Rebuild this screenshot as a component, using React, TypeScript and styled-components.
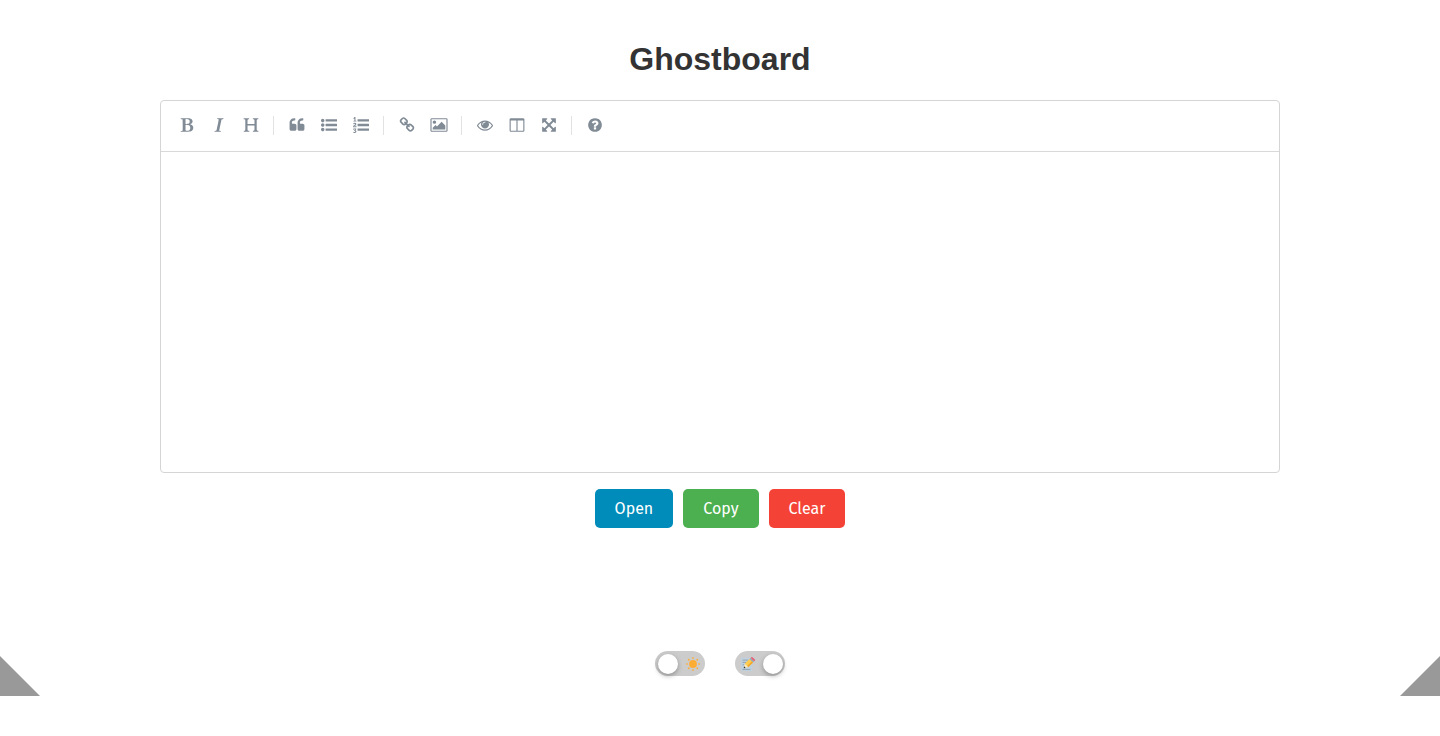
import React, { useState } from "react";
import styled, { createGlobalStyle } from "styled-components";

const GlobalStyle = createGlobalStyle`
  * { box-sizing: border-box; }
  body { margin: 0; background: #fff; color: #333; }
`;

const Page = styled.div`
  min-height: 100vh;
  display: flex;
  flex-direction: column;
`;

const Main = styled.main`
  width: 100%;
  max-width: 1160px;
  margin: 0 auto;
  padding: 40px 20px 24px;
  display: flex;
  flex-direction: column;
`;

const Title = styled.h1`
  margin: 0 0 22px;
  font: bold 32px/38px "Liberation Sans", Arial, sans-serif;
  text-align: center;
`;

const Editor = styled.section`
  border: 1px solid #d5d5d5;
  border-radius: 4px;
  display: flex;
  flex-direction: column;
  overflow: hidden;
`;

const Toolbar = styled.div`
  display: flex;
  flex-wrap: wrap;
  align-items: center;
  gap: 2px;
  padding: 9px 10px 11px 11px;
  border-bottom: 1px solid #d9d9d9;
`;

const ToolButton = styled.button`
  width: 30px;
  height: 30px;
  padding: 0;
  border: 0;
  border-radius: 3px;
  background: transparent;
  color: #818b96;
  display: flex;
  align-items: center;
  justify-content: center;
  cursor: pointer;
  &:hover { background: #f2f2f2; }
`;

const Separator = styled.span`
  width: 1px;
  height: 19px;
  margin: 0 6px 0 5px;
  background: #e2e2e2;
`;

const TextArea = styled.textarea`
  display: block;
  width: 100%;
  height: 320px;
  padding: 10px;
  border: 0;
  outline: 0;
  resize: none;
  background: transparent;
  color: inherit;
  font: 16px/24px "Fira Sans", "Noto Sans", sans-serif;
`;

const Actions = styled.div`
  display: flex;
  justify-content: center;
  gap: 10px;
  margin-top: 16px;
`;

const ActionButton = styled.button<{ $color: string }>`
  padding: 10px 20px;
  border: 0;
  border-radius: 5px;
  background: ${(p) => p.$color};
  color: #fff;
  font: 400 16px/19px "Fira Sans", "Noto Sans", sans-serif;
  cursor: pointer;
`;

const Footer = styled.footer`
  margin-top: auto;
  padding-bottom: 40px;
  display: flex;
  align-items: flex-end;
  justify-content: space-between;
`;

const CornerButton = styled.button<{ $side: "left" | "right" }>`
  width: 40px;
  height: 40px;
  padding: 0;
  border: 0;
  background: #999;
  clip-path: ${(p) =>
    p.$side === "left"
      ? "polygon(0 0, 100% 100%, 0 100%)"
      : "polygon(100% 0, 100% 100%, 0 100%)"};
  cursor: pointer;
`;

const Switches = styled.div`
  display: flex;
  gap: 30px;
  margin-bottom: 20px;
`;

const Track = styled.label<{ $on: boolean }>`
  width: 50px;
  height: 25px;
  padding: 3px 2px 2px 3px;
  border-radius: 13px;
  background: #ccc;
  display: flex;
  flex-direction: ${(p) => (p.$on ? "row-reverse" : "row")};
  align-items: center;
  justify-content: space-between;
  cursor: pointer;
`;

const Knob = styled.input`
  appearance: none;
  width: 20px;
  height: 20px;
  margin: 0;
  border-radius: 50%;
  background: #fff;
  box-shadow: 0 2px 5px rgba(0, 0, 0, 0.3);
  cursor: pointer;
`;

const Emoji = styled.svg`
  width: 14px;
  height: 14px;
  margin: 0 3px;
`;

type Glyph = { label: string; d: string; box?: string; width?: number };

const groups: Glyph[][] = [
  [
    {
      label: "Bold",
      d: "M747 1521q74 32 140 32 376 0 376-335 0-114-41-180-27-44-61.5-74t-67.5-46.5-80.5-25-84-10.5-94.5-2q-73 0-101 10 0 53-.5 159t-.5 158q0 8-1 67.5t-.5 96.5 4.5 83.5 12 66.5zm-14-746q42 7 109 7 82 0 143-13t110-44.5 74.5-89.5 25.5-142q0-70-29-122.5t-79-82-108-43.5-124-14q-50 0-130 13 0 50 4 151t4 152q0 27-.5 80t-.5 79q0 46 1 69zm-541 889l2-94q15-4 85-16t106-27q7-12 12.5-27t8.5-33.5 5.5-32.5 3-37.5.5-34v-65.5q0-982-22-1025-4-8-22-14.5t-44.5-11-49.5-7-48.5-4.5-30.5-3l-4-83q98-2 340-11.5t373-9.5q23 0 68.5.5t67.5.5q70 0 136.5 13t128.5 42 108 71 74 104.5 28 137.5q0 52-16.5 95.5t-39 72-64.5 57.5-73 45-84 40q154 35 256.5 134t102.5 248q0 100-35 179.5t-93.5 130.5-138 85.5-163.5 48.5-176 14q-44 0-132-3t-132-3q-106 0-307 11t-231 12z",
    },
    {
      label: "Italic",
      d: "M384 1662l17-85q22-7 61.5-16.5t72-19 59.5-23.5q28-35 41-101 1-7 62-289t114-543.5 52-296.5v-25q-24-13-54.5-18.5t-69.5-8-58-5.5l19-103q33 2 120 6.5t149.5 7 120.5 2.5q48 0 98.5-2.5t121-7 98.5-6.5q-5 39-19 89-30 10-101.5 28.5t-108.5 33.5q-8 19-14 42.5t-9 40-7.5 45.5-6.5 42q-27 148-87.5 419.5t-77.5 355.5q-2 9-13 58t-20 90-16 83.5-6 57.5l1 18q17 4 185 31-3 44-16 99-11 0-32.5 1.5t-32.5 1.5q-29 0-87-10t-86-10q-138-2-206-2-51 0-143 9t-121 11z",
    },
    {
      label: "Heading",
      d: "M1682 1664q-44 0-132.5-3.5t-133.5-3.5q-44 0-132 3.5t-132 3.5q-24 0-37-20.5t-13-45.5q0-31 17-46t39-17 51-7 45-15q33-21 33-140l-1-391q0-21-1-31-13-4-50-4h-675q-38 0-51 4-1 10-1 31l-1 371q0 142 37 164 16 10 48 13t57 3.5 45 15 20 45.5q0 26-12.5 48t-36.5 22q-47 0-139.5-3.5t-138.5-3.5q-43 0-128 3.5t-127 3.5q-23 0-35.5-21t-12.5-45q0-30 15.5-45t36-17.5 47.5-7.5 42-15q33-23 33-143l-1-57v-813q0-3 .5-26t0-36.5-1.5-38.5-3.5-42-6.5-36.5-11-31.5-16-18q-15-10-45-12t-53-2-41-14-18-45q0-26 12-48t36-22q46 0 138.5 3.5t138.5 3.5q42 0 126.5-3.5t126.5-3.5q25 0 37.5 22t12.5 48q0 30-17 43.5t-38.5 14.5-49.5 4-43 13q-35 21-35 160l1 320q0 21 1 32 13 3 39 3h699q25 0 38-3 1-11 1-32l1-320q0-139-35-160-18-11-58.5-12.5t-66-13-25.5-49.5q0-26 12.5-48t37.5-22q44 0 132 3.5t132 3.5q43 0 129-3.5t129-3.5q25 0 37.5 22t12.5 48q0 30-17.5 44t-40 14.5-51.5 3-44 12.5q-35 23-35 161l1 943q0 119 34 140 16 10 46 13.5t53.5 4.5 41.5 15.5 18 44.5q0 26-12 48t-36 22z",
    },
  ],
  [
    {
      label: "Quote",
      d: "M832 960v384q0 80-56 136t-136 56h-384q-80 0-136-56t-56-136v-704q0-104 40.5-198.5t109.5-163.5 163.5-109.5 198.5-40.5h64q26 0 45 19t19 45v128q0 26-19 45t-45 19h-64q-106 0-181 75t-75 181v32q0 40 28 68t68 28h224q80 0 136 56t56 136zm896 0v384q0 80-56 136t-136 56h-384q-80 0-136-56t-56-136v-704q0-104 40.5-198.5t109.5-163.5 163.5-109.5 198.5-40.5h64q26 0 45 19t19 45v128q0 26-19 45t-45 19h-64q-106 0-181 75t-75 181v32q0 40 28 68t68 28h224q80 0 136 56t56 136z",
    },
    {
      label: "Generic List",
      d: "M384 1408q0 80-56 136t-136 56-136-56-56-136 56-136 136-56 136 56 56 136zm0-512q0 80-56 136t-136 56-136-56-56-136 56-136 136-56 136 56 56 136zm1408 416v192q0 13-9.5 22.5t-22.5 9.5h-1216q-13 0-22.5-9.5t-9.5-22.5v-192q0-13 9.5-22.5t22.5-9.5h1216q13 0 22.5 9.5t9.5 22.5zm-1408-928q0 80-56 136t-136 56-136-56-56-136 56-136 136-56 136 56 56 136zm1408 416v192q0 13-9.5 22.5t-22.5 9.5h-1216q-13 0-22.5-9.5t-9.5-22.5v-192q0-13 9.5-22.5t22.5-9.5h1216q13 0 22.5 9.5t9.5 22.5zm0-512v192q0 13-9.5 22.5t-22.5 9.5h-1216q-13 0-22.5-9.5t-9.5-22.5v-192q0-13 9.5-22.5t22.5-9.5h1216q13 0 22.5 9.5t9.5 22.5z",
    },
    {
      label: "Numbered List",
      d: "M381 1620q0 80-54.5 126t-135.5 46q-106 0-172-66l57-88q49 45 106 45 29 0 50.5-14.5t21.5-42.5q0-64-105-56l-26-56q8-10 32.5-43.5t42.5-54 37-38.5v-1q-16 0-48.5 1t-48.5 1v53h-106v-152h333v88l-95 115q51 12 81 49t30 88zm2-627v159h-362q-6-36-6-54 0-51 23.5-93t56.5-68 66-47.5 56.5-43.5 23.5-45q0-25-14.5-38.5t-39.5-13.5q-46 0-81 58l-85-59q24-51 71.5-79.5t105.5-28.5q73 0 123 41.5t50 112.5q0 50-34 91.5t-75 64.5-75.5 50.5-35.5 52.5h127v-60h105zm1409 319v192q0 13-9.5 22.5t-22.5 9.5h-1216q-13 0-22.5-9.5t-9.5-22.5v-192q0-14 9-23t23-9h1216q13 0 22.5 9.5t9.5 22.5zm-1408-899v99h-335v-99h107q0-41 .5-121.5t.5-121.5v-12h-2q-8 17-50 54l-71-76 136-127h106v404h108zm1408 387v192q0 13-9.5 22.5t-22.5 9.5h-1216q-13 0-22.5-9.5t-9.5-22.5v-192q0-14 9-23t23-9h1216q13 0 22.5 9.5t9.5 22.5zm0-512v192q0 13-9.5 22.5t-22.5 9.5h-1216q-13 0-22.5-9.5t-9.5-22.5v-192q0-13 9.5-22.5t22.5-9.5h1216q13 0 22.5 9.5t9.5 22.5z",
    },
  ],
  [
    {
      label: "Create Link",
      d: "M1520 1216q0-40-28-68l-208-208q-28-28-68-28-42 0-72 32 3 3 19 18.5t21.5 21.5 15 19 13 25.5 3.5 27.5q0 40-28 68t-68 28q-15 0-27.5-3.5t-25.5-13-19-15-21.5-21.5-18.5-19q-33 31-33 73 0 40 28 68l206 207q27 27 68 27 40 0 68-26l147-146q28-28 28-67zm-703-705q0-40-28-68l-206-207q-28-28-68-28-39 0-68 27l-147 146q-28 28-28 67 0 40 28 68l208 208q27 27 68 27 42 0 72-31-3-3-19-18.5t-21.5-21.5-15-19-13-25.5-3.5-27.5q0-40 28-68t68-28q15 0 27.5 3.5t25.5 13 19 15 21.5 21.5 18.5 19q33-31 33-73zm895 705q0 120-85 203l-147 146q-83 83-203 83-121 0-204-85l-206-207q-83-83-83-203 0-123 88-209l-88-88q-86 88-208 88-120 0-204-84l-208-208q-84-84-84-204t85-203l147-146q83-83 203-83 121 0 204 85l206 207q83 83 83 203 0 123-88 209l88 88q86-88 208-88 120 0 204 84l208 208q84 84 84 204z",
    },
    {
      label: "Insert Image",
      box: "0 0 1920 1792",
      width: 18,
      d: "M640 576q0 80-56 136t-136 56-136-56-56-136 56-136 136-56 136 56 56 136zm1024 384v448h-1408v-192l320-320 160 160 512-512zm96-704h-1600q-13 0-22.5 9.5t-9.5 22.5v1216q0 13 9.5 22.5t22.5 9.5h1600q13 0 22.5-9.5t9.5-22.5v-1216q0-13-9.5-22.5t-22.5-9.5zm160 32v1216q0 66-47 113t-113 47h-1600q-66 0-113-47t-47-113v-1216q0-66 47-113t113-47h1600q66 0 113 47t47 113z",
    },
  ],
  [
    {
      label: "Toggle Preview",
      d: "M1664 960q-152-236-381-353 61 104 61 225 0 185-131.5 316.5t-316.5 131.5-316.5-131.5-131.5-316.5q0-121 61-225-229 117-381 353 133 205 333.5 326.5t434.5 121.5 434.5-121.5 333.5-326.5zm-720-384q0-20-14-34t-34-14q-125 0-214.5 89.5t-89.5 214.5q0 20 14 34t34 14 34-14 14-34q0-86 61-147t147-61q20 0 34-14t14-34zm848 384q0 34-20 69-140 230-376.5 368.5t-499.5 138.5-499.5-139-376.5-368q-20-35-20-69t20-69q140-229 376.5-368t499.5-139 499.5 139 376.5 368q20 35 20 69z",
    },
    {
      label: "Toggle Side by Side",
      box: "-64 0 1792 1792",
      d: "M160 1536h608v-1152h-640v1120q0 13 9.5 22.5t22.5 9.5zm1376-32v-1120h-640v1152h608q13 0 22.5-9.5t9.5-22.5zm128-1216v1216q0 66-47 113t-113 47h-1344q-66 0-113-47t-47-113v-1216q0-66 47-113t113-47h1344q66 0 113 47t47 113z",
    },
    {
      label: "Toggle Fullscreen",
      d: "M1411 541l-355 355 355 355 144-144q29-31 70-14 39 17 39 59v448q0 26-19 45t-45 19h-448q-42 0-59-40-17-39 14-69l144-144-355-355-355 355 144 144q31 30 14 69-17 40-59 40h-448q-26 0-45-19t-19-45v-448q0-42 40-59 39-17 69 14l144 144 355-355-355-355-144 144q-19 19-45 19-12 0-24-5-40-17-40-59v-448q0-26 19-45t45-19h448q42 0 59 40 17 39-14 69l-144 144 355 355 355-355-144-144q-31-30-14-69 17-40 59-40h448q26 0 45 19t19 45v448q0 42-39 59-13 5-25 5-26 0-45-19z",
    },
  ],
  [
    {
      label: "Markdown Guide",
      d: "M1024 1376v-192q0-14-9-23t-23-9h-192q-14 0-23 9t-9 23v192q0 14 9 23t23 9h192q14 0 23-9t9-23zm256-672q0-88-55.5-163t-138.5-116-170-41q-243 0-371 213-15 24 8 42l132 100q7 6 19 6 16 0 25-12 53-68 86-92 34-24 86-24 48 0 85.5 26t37.5 59q0 38-20 61t-68 45q-63 28-115.5 86.5t-52.5 125.5v36q0 14 9 23t23 9h192q14 0 23-9t9-23q0-19 21.5-49.5t54.5-49.5q32-18 49-28.5t46-35 44.5-48 28-60.5 12.5-81zm384 192q0 209-103 385.5t-279.5 279.5-385.5 103-385.5-103-279.5-279.5-103-385.5 103-385.5 279.5-279.5 385.5-103 385.5 103 279.5 279.5 103 385.5z",
    },
  ],
];

const rays = [0, 45, 90, 135, 180, 225, 270, 315];

const Sun = () => (
  <Emoji viewBox="0 0 36 36" aria-hidden="true">
    <circle cx="18" cy="18" r="10" fill="#ffac33" />
    {rays.map((a) => (
      <rect key={a} x="16" y="0" width="4" height="5" rx="2" fill="#ffac33" transform={`rotate(${a} 18 18)`} />
    ))}
  </Emoji>
);

const Memo = () => (
  <Emoji viewBox="0 0 36 36" aria-hidden="true">
    <rect x="0" y="2" width="29" height="34" rx="2" fill="#bfd0de" />
    <path d="M4 8h15M4 14h11M4 20h5M4 32h20" stroke="#8899a6" strokeWidth="2" />
    <path d="M7 29l3-12 9 9z" fill="#ffe8b6" />
    <path d="M7 29l1-5 4 4z" fill="#292f33" />
    <path d="M10 17L22 5l9 9-12 12z" fill="#ffcc4d" />
    <path d="M16 23L28 11l3 3-12 12z" fill="#f4a62a" />
    <path d="M22 5l3-3 9 9-3 3z" fill="#99aab5" />
    <path d="M25 2l1-1q2-2 4 0l5 5q2 2 0 4l-1 1z" fill="#ea596e" />
  </Emoji>
);

export default function App() {
  const [text, setText] = useState("");
  const [dark, setDark] = useState(false);
  const [markdown, setMarkdown] = useState(true);

  return (
    <>
      <GlobalStyle />
      <Page>
        <Main>
          <Title>Ghostboard</Title>
          <Editor>
            <Toolbar role="toolbar" aria-label="Formatting">
              {groups.map((group, i) => (
                <React.Fragment key={i}>
                  {i > 0 && <Separator />}
                  {group.map((g) => (
                    <ToolButton key={g.label} type="button" aria-label={g.label}>
                      <svg width={g.width ?? 16} height="16" viewBox={g.box ?? "0 0 1792 1792"} fill="currentColor">
                        <path d={g.d} />
                      </svg>
                    </ToolButton>
                  ))}
                </React.Fragment>
              ))}
            </Toolbar>
            <TextArea aria-label="Board text" value={text} onChange={(e) => setText(e.target.value)} />
          </Editor>
          <Actions>
            <ActionButton type="button" $color="#008cba">Open</ActionButton>
            <ActionButton type="button" $color="#4caf50">Copy</ActionButton>
            <ActionButton type="button" $color="#f44336" onClick={() => setText("")}>Clear</ActionButton>
          </Actions>
        </Main>
        <Footer>
          <CornerButton type="button" $side="left" aria-label="Previous board" />
          <Switches>
            <Track $on={dark}>
              <Knob type="checkbox" aria-label="Dark theme" checked={dark} onChange={() => setDark(!dark)} />
              <Sun />
            </Track>
            <Track $on={markdown}>
              <Knob type="checkbox" aria-label="Markdown editor" checked={markdown} onChange={() => setMarkdown(!markdown)} />
              <Memo />
            </Track>
          </Switches>
          <CornerButton type="button" $side="right" aria-label="Next board" />
        </Footer>
      </Page>
    </>
  );
}
